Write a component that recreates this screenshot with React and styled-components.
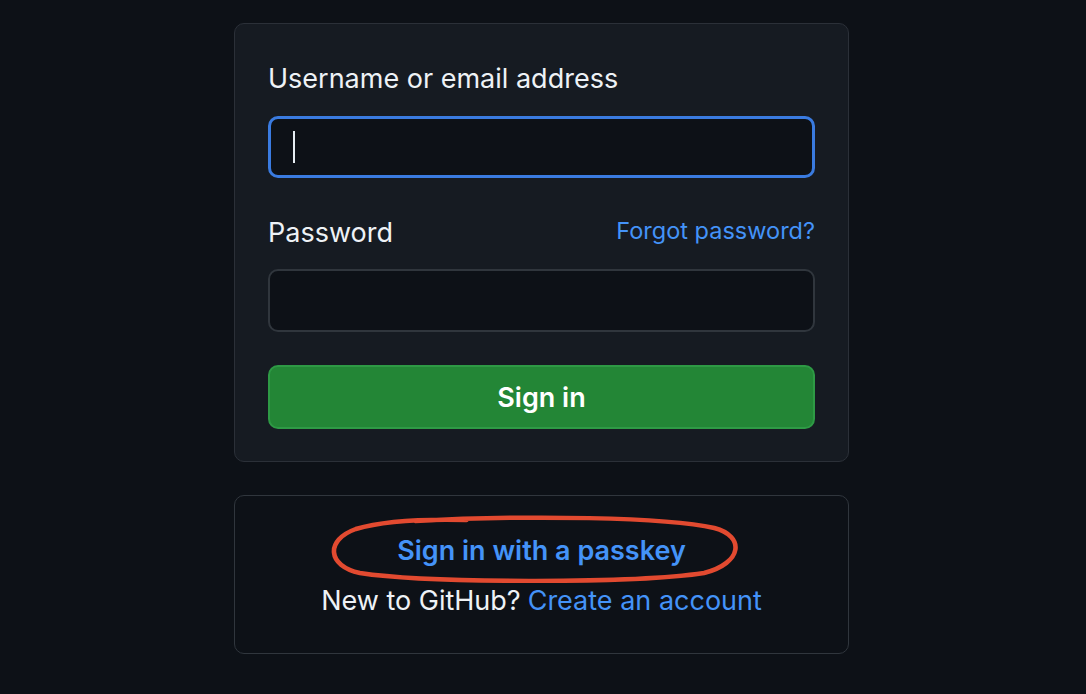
import React from 'react';
import styled, { createGlobalStyle } from 'styled-components';

const GlobalStyle = createGlobalStyle`
  html, body {
    margin: 0;
    padding: 0;
    background: #0d1117;
  }
  body {
    font-family: Inter, "Noto Sans", "Liberation Sans", sans-serif;
    color: #e6edf3;
  }
`;

const Page = styled.main`
  min-height: 694px;
  display: flex;
  flex-direction: column;
  align-items: center;
  padding: 23px 3px 0 0;
  box-sizing: border-box;
`;

const Card = styled.div`
  width: 615px;
  box-sizing: border-box;
  border: 1px solid ${({ muted }) => (muted ? '#30363d' : '#2b3038')};
  border-radius: 10px;
  background: ${({ muted }) => (muted ? '#0d1117' : '#161b22')};
  padding: ${({ muted }) => (muted ? '29px 33px 28px' : '36px 33px 32px')};
  margin-bottom: ${({ muted }) => (muted ? '0' : '33px')};
  display: flex;
  flex-direction: column;
  align-items: ${({ muted }) => (muted ? 'center' : 'stretch')};
`;

const LabelRow = styled.div`
  display: flex;
  justify-content: space-between;
  align-items: center;
  height: 36px;
  margin-top: ${({ top }) => top || 0}px;
`;

const Label = styled.label`
  font-size: 27px;
  font-weight: 400;
  color: #eef2f6;
`;

const SmallLink = styled.a`
  font-size: 23.5px;
  color: #4493f8;
  text-decoration: none;
  position: relative;
  top: -2px;
`;

const Field = styled.div`
  margin-top: ${({ top }) => top}px;
  height: ${({ focused }) => (focused ? 62 : 63)}px;
  box-sizing: border-box;
  border-radius: 10px;
  background: #0d1117;
  border: ${({ focused }) => (focused ? '3px solid #3a7be0' : '2px solid #30363d')};
  display: flex;
  align-items: center;
  padding-left: 22px;
`;

const Caret = styled.span`
  width: 2px;
  height: 32px;
  background: #e6edf3;
`;

const Button = styled.button`
  margin-top: 33px;
  height: 64px;
  border-radius: 10px;
  border: 2px solid #2e9a45;
  background: #238636;
  color: #ffffff;
  font-family: inherit;
  font-size: 27px;
  font-weight: 600;
  cursor: pointer;
`;

const Line = styled.div`
  height: 50px;
  display: flex;
  align-items: center;
  justify-content: center;
  font-size: 27px;
  color: #eef2f6;
  gap: 7px;
`;

const Highlight = styled.span`
  position: relative;
  display: inline-block;
`;

const PasskeyLink = styled.a`
  color: #4493f8;
  font-weight: 600;
  text-decoration: none;
`;

const BlueLink = styled.a`
  color: #4493f8;
  text-decoration: none;
`;

const Scribble = styled.svg`
  position: absolute;
  left: -74px;
  top: -19px;
  pointer-events: none;
`;

export default function App() {
  return (
    <>
      <GlobalStyle />
      <Page>
        <Card>
          <LabelRow>
            <Label>Username or email address</Label>
          </LabelRow>
          <Field focused top={20}>
            <Caret />
          </Field>
          <LabelRow top={36}>
            <Label>Password</Label>
            <SmallLink href="#">Forgot password?</SmallLink>
          </LabelRow>
          <Field top={19} />
          <Button>Sign in</Button>
        </Card>
        <Card muted>
          <Line>
            <Highlight>
              <PasskeyLink href="#">Sign in with a passkey</PasskeyLink>
              <Scribble width="420" height="68" viewBox="0 0 410 68" preserveAspectRatio="none">
                <path
                  d="M 90 6 C 200 0 335 2 382 13 C 412 21 410 48 372 58 C 300 69 100 68 36 58 C 4 51 2 25 32 14 C 58 6 100 4 140 5"
                  fill="none"
                  stroke="#e24a30"
                  strokeWidth="4.5"
                  strokeLinecap="round"
                />
              </Scribble>
            </Highlight>
          </Line>
          <Line>
            New to GitHub?
            <BlueLink href="#">Create an account</BlueLink>
          </Line>
        </Card>
      </Page>
    </>
  );
}
